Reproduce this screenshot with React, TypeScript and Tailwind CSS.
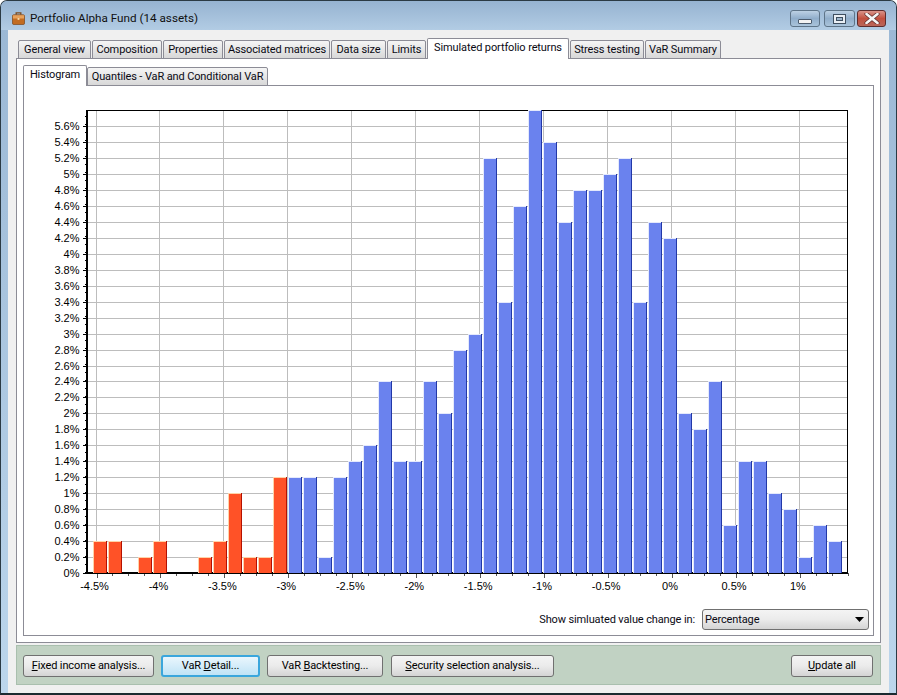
import React from "react";

const font = { fontFamily: 'Roboto, "Noto Sans", "Liberation Sans", sans-serif' };

const topTabs: [string, number, boolean][] = [
  ["General view", 73, false],
  ["Composition", 70, false],
  ["Properties", 60, false],
  ["Associated matrices", 106, false],
  ["Data size", 55, false],
  ["Limits", 39, false],
  ["Simulated portfolio returns", 142, true],
  ["Stress testing", 74, false],
  ["VaR Summary", 76, false],
];

const bars = [
  0.4, 0.4, 0, 0.2, 0.4, 0, 0, 0.2, 0.4, 1, 0.2, 0.2, 1.2, 1.2, 1.2, 0.2, 1.2, 1.4, 1.6, 2.4, 1.4, 1.4, 2.4, 2, 2.8, 3,
  5.2, 3.4, 4.6, 5.8, 5.4, 4.4, 4.8, 4.8, 5, 5.2, 3.4, 4.4, 4.2, 2, 1.8, 2.4, 0.6, 1.4, 1.4, 1, 0.8, 0.2, 0.6, 0.4,
];

const Y0 = 573;
const PER = 79.8;
const yLabels = Array.from({ length: 29 }, (_, i) => i * 0.2);
const xLabels = ["-4.5%", "-4%", "-3.5%", "-3%", "-2.5%", "-2%", "-1.5%", "-1%", "-0.5%", "0%", "0.5%", "1%"];
const xAt = (i: number) => 96.5 + i * 63.95;
const fmt = (v: number) => `${Number(v.toFixed(1))}%`;

function Chart() {
  return (
    <svg viewBox="24 86 848 515" width={848} height={515} className="block shrink-0" style={{ fontFamily: '"Liberation Sans", Arial, sans-serif' }}>
      {yLabels.map((v) => {
        const y = Math.round(Y0 - v * PER) + 0.5;
        return (
          <g key={v}>
            {v > 0 && <line x1={87} x2={847} y1={y} y2={y} stroke="#bdbdbd" strokeWidth={1} />}
            <line x1={83} x2={87} y1={y} y2={y} stroke="#000" strokeWidth={1} />
            <text x={79.5} y={y + 3.5} fontSize={11} textAnchor="end" fill="#000">
              {fmt(v)}
            </text>
          </g>
        );
      })}
      {Array.from({ length: 48 }, (_, i) => {
        const x = Math.round(96.5 + i * 15.99) + 0.5;
        return <line key={i} x1={x} x2={x} y1={573} y2={i % 4 === 0 ? 578 : 576} stroke="#555" strokeWidth={1} />;
      })}
      {xLabels.map((l, i) => (
        <g key={l}>
          <line x1={Math.round(xAt(i)) - 0.5} x2={Math.round(xAt(i)) - 0.5} y1={110} y2={573} stroke="#bdbdbd" strokeWidth={1} />
          <text x={xAt(i) - 2} y={590} fontSize={11} textAnchor="middle" fill="#000">
            {l}
          </text>
        </g>
      ))}
      <line x1={86} x2={848} y1={110.5} y2={110.5} stroke="#000" strokeWidth={1} />
      <line x1={847.5} x2={847.5} y1={110} y2={574} stroke="#000" strokeWidth={1} />
      <line x1={87} x2={87} y1={110} y2={574} stroke="#000" strokeWidth={2} />
      <line x1={86} x2={848} y1={573} y2={573} stroke="#000" strokeWidth={2} />
      {Array.from({ length: 58 }, (_, i) => (
        <line key={i} x1={85} x2={86} y1={116.5 + i * 8} y2={116.5 + i * 8} stroke="#000" strokeWidth={1} />
      ))}
      {bars.map((v, i) => {
        if (v === 0) return null;
        const red = i <= 12;
        const x = 93 + i * 15;
        const top = Math.round(Y0 - v * PER);
        const h = 573 - top;
        return (
          <g key={i}>
            <rect x={x} y={top} width={14} height={h} fill={red ? "#ffd3a8" : "#e4e9fc"} />
            <rect x={x + 1} y={top + 1} width={12} height={h - 1} fill={red ? "#ff5227" : "#6a82ee"} />
            <rect x={x + 13} y={top} width={1} height={h} fill={red ? "#b51000" : "#2238a8"} />
          </g>
        );
      })}
    </svg>
  );
}

function Btn({ w, children, active }: { w: string; children: React.ReactNode; active?: boolean }) {
  return (
    <button
      className={
        active
          ? `${w} h-[22px] flex items-center justify-center whitespace-nowrap text-[11px] tracking-[-0.12px] text-black rounded-[3px] border-2 border-[#3aa6dc] bg-gradient-to-b from-[#eaf6fd] to-[#bfe3f6]`
          : `${w} h-[22px] flex items-center justify-center whitespace-nowrap text-[11px] tracking-[-0.12px] text-black rounded-[3px] border border-[#707070] bg-gradient-to-b from-[#f4f4f4] via-[#ebebeb] to-[#d4d4d4]`
      }
    >
      {children}
    </button>
  );
}

function Caption({ w, kind }: { w: string; kind: "min" | "max" | "close" }) {
  const cls =
    kind === "close"
      ? `${w} h-[17px] rounded-[3px] border border-[#5e2c2c] flex items-center justify-center bg-gradient-to-b from-[#d9938a] via-[#c2503f] to-[#b9665a]`
      : `${w} h-[17px] rounded-[3px] border border-[#5e7488] flex items-center justify-center bg-gradient-to-b from-[#bdd1e4] via-[#91aecb] to-[#a9c3da]`;
  return (
    <div className={cls}>
      {kind === "min" && <div className="w-[14px] h-[5px] mt-[6px] bg-[#f2f2f2] border border-[#4c5c6e] rounded-[1px]" />}
      {kind === "max" && (
        <div className="w-[13px] h-[10px] border-[1.5px] border-[#3f4f60] bg-[#e8eef4] flex items-center justify-center">
          <div className="w-[7px] h-[4px] bg-[#9db6cd] border border-[#3f4f60]" />
        </div>
      )}
      {kind === "close" && (
        <svg width="16" height="11" viewBox="0 0 16 11">
          <path d="M2.5 1 L13.5 10 M13.5 1 L2.5 10" stroke="#5a2a2a" strokeWidth="4" strokeLinecap="round" />
          <path d="M2.5 1 L13.5 10 M13.5 1 L2.5 10" stroke="#f5f5f5" strokeWidth="2.6" strokeLinecap="round" />
        </svg>
      )}
    </div>
  );
}

export default function App() {
  return (
    <div className="w-[897px] h-[695px] flex flex-col rounded-t-[7px] border-t border-x border-[#2b3a44] border-b-2 border-b-[#1b2a30] overflow-hidden bg-gradient-to-b from-[#9ab7d4] to-[#bcd6ec] text-[#0a0a14]" style={font}>
      <div className="h-[29px] shrink-0 pt-[6px] flex items-center bg-gradient-to-b from-[#96b3d1] to-[#b2cce4]">
        <svg width="13" height="13" viewBox="0 0 14 14" className="ml-[11px] shrink-0">
          <path d="M4.5 3 V1 H9.5 V3" fill="none" stroke="#7a4a1e" strokeWidth="1.4" />
          <rect x="0.5" y="3" width="13" height="10.5" rx="1.5" fill="#c26c22" stroke="#7c4a20" strokeWidth="0.8" />
          <rect x="1" y="3.5" width="12" height="3.5" fill="#e8a25c" />
          <rect x="6" y="6.5" width="2" height="2" fill="#f5d9a8" />
        </svg>
        <span className="ml-[5px] text-[11.7px] mt-[1px] text-[#101010] whitespace-nowrap">Portfolio Alpha Fund (14 assets)</span>
        <div className="ml-auto mr-[10px] flex items-start self-start mt-[3px]">
          <Caption w="w-[30px]" kind="min" />
          <div className="w-[4px]" />
          <Caption w="w-[31px]" kind="max" />
          <div className="w-[2px]" />
          <Caption w="w-[29px]" kind="close" />
        </div>
      </div>
      <div className="ml-[7px] flex-1 bg-[#f0f0f0] px-[8px] pt-[8px] pb-[6px] flex flex-col min-h-0 w-[881px]">
        <div className="flex items-end gap-[1px] h-[21px] -mb-[1px] relative z-10 pl-[2px]">
          {topTabs.map(([label, w, sel]) => (
            <div
              key={label}
              style={{ width: w }}
              className={
                sel
                  ? "h-[21px] shrink-0 flex items-center justify-center whitespace-nowrap text-[11px] tracking-[-0.12px] bg-white border border-b-0 border-[#8c8c96] rounded-t-[2px] pb-[1px]"
                  : "h-[19px] shrink-0 flex items-center justify-center whitespace-nowrap text-[11px] tracking-[-0.12px] border border-[#8c8c96] rounded-t-[2px] pt-[2px] bg-gradient-to-b from-[#f5f5f5] to-[#d8d8d8]"
              }
            >
              {label}
            </div>
          ))}
        </div>
        <div className="w-[865px] h-[585px] shrink-0 border border-[#8c8c96] bg-white px-[6px] pt-[6px] pb-[6px] flex flex-col">
          <div className="flex items-end h-[21px] -mb-[1px] relative z-10">
            <div className="w-[64px] h-[21px] flex items-center justify-center whitespace-nowrap text-[11px] tracking-[-0.12px] bg-white border border-b-0 border-[#8c8c96] rounded-t-[2px] pb-[1px]">Histogram</div>
            <div className="w-[181px] h-[19px] flex items-center justify-center whitespace-nowrap text-[11px] tracking-[-0.12px] border border-[#8c8c96] rounded-t-[2px] pt-[2px] bg-gradient-to-b from-[#f5f5f5] to-[#d8d8d8]">Quantiles - VaR and Conditional VaR</div>
          </div>
          <div className="flex-1 border border-[#8c8c96] flex flex-col min-h-0">
            <Chart />
            <div className="flex items-center justify-end mt-[8px] pr-[4px] gap-[7px]">
              <span className="text-[11px] tracking-[-0.12px] whitespace-nowrap mt-[2px]">Show simluated value change in:</span>
              <div className="w-[167px] h-[21px] rounded-[3px] border border-[#707070] bg-gradient-to-b from-[#f4f4f4] via-[#ebebeb] to-[#d4d4d4] flex items-center justify-between pl-[2px] pr-[4px] text-[11px] tracking-[-0.12px]">
                <span className="mt-[2px]">Percentage</span>
                <svg width="9" height="5" viewBox="0 0 9 5">
                  <path d="M0 0 H9 L4.5 5 Z" fill="#000" />
                </svg>
              </div>
            </div>
          </div>
        </div>
        <div className="w-[865px] mt-[2px] h-[40px] shrink-0 border border-[#a9bfae] bg-[#c1d2c3] flex items-center pl-[6px] pr-[7px] pt-[2px]">
          <Btn w="w-[131px]"><span><u>F</u>ixed income analysis...</span></Btn>
          <div className="w-[7px]" />
          <Btn w="w-[99px]" active><span>VaR <u>D</u>etail...</span></Btn>
          <div className="w-[7px]" />
          <Btn w="w-[116px]"><span>VaR <u>B</u>acktesting...</span></Btn>
          <div className="w-[8px]" />
          <Btn w="w-[163px]"><span><u>S</u>ecurity selection analysis...</span></Btn>
          <div className="flex-1" />
          <Btn w="w-[82px]"><span><u>U</u>pdate all</span></Btn>
        </div>
      </div>
    </div>
  );
}
